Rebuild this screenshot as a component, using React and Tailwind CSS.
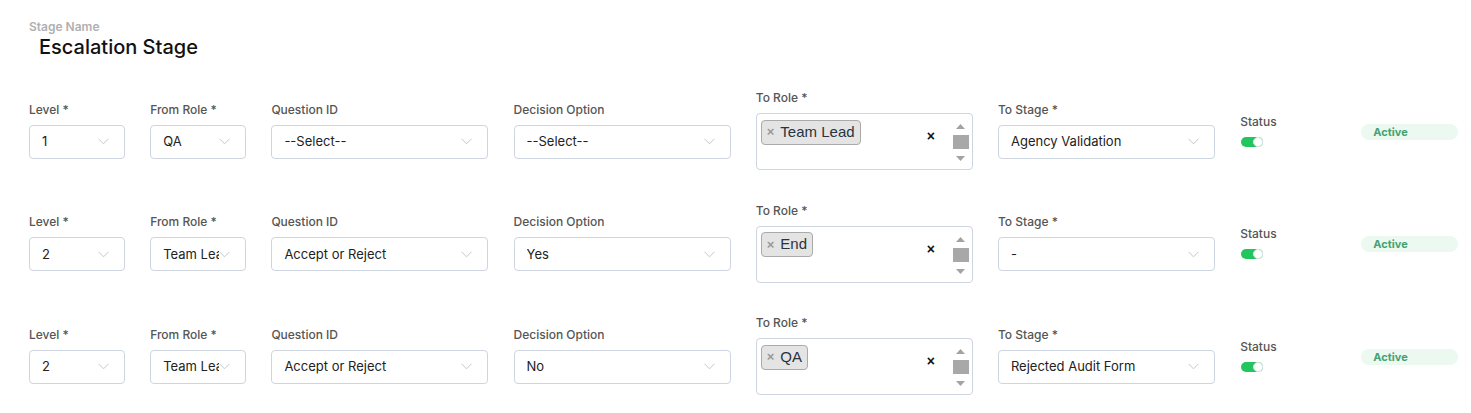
import React from 'react';

const rows = [
  { level: '1', fromRole: 'QA', question: '--Select--', decision: '--Select--', toRole: 'Team Lead', toStage: 'Agency Validation' },
  { level: '2', fromRole: 'Team Lead', question: 'Accept or Reject', decision: 'Yes', toRole: 'End', toStage: '-' },
  { level: '2', fromRole: 'Team Lead', question: 'Accept or Reject', decision: 'No', toRole: 'QA', toStage: 'Rejected Audit Form' },
];

function Chevron() {
  return (
    <svg width="11" height="7" viewBox="0 0 11 7" fill="none" className="shrink-0">
      <path d="M0.5 0.8 L5.5 5.8 L10.5 0.8" stroke="#c3c7cf" strokeWidth="1" />
    </svg>
  );
}

function Label({ children }) {
  return <div className="text-[12px] leading-[16px] font-medium text-[#555] mb-[7px]">{children}</div>;
}

function Select({ value, width }) {
  return (
    <div className={`${width} h-[34px] border border-[#cdd5e0] rounded-[4px] bg-white flex items-center pl-[12px] pr-[15px]`}>
      <span className="flex-1 overflow-hidden whitespace-nowrap text-[13px] text-[#222]">{value}</span>
      <Chevron />
    </div>
  );
}

function Field({ label, value, width }) {
  return (
    <div className={`${width} shrink-0`}>
      <Label>{label}</Label>
      <Select value={value} width={width} />
    </div>
  );
}

function MultiRole({ tag }) {
  return (
    <div className="w-[217px] shrink-0">
      <Label>To Role *</Label>
      <div className="w-[217px] h-[57px] border border-[#cdd5e0] rounded-[4px] bg-white flex pl-[4px] pt-[4px] pr-[3px]">
        <div className="flex-1">
          <span className="inline-flex items-center h-[25px] px-[5px] bg-[#e4e4e4] border border-[#aaa] rounded-[4px] font-['Liberation_Sans',Arial,sans-serif] text-[15px] text-[#2a3340]">
            <span className="text-[#999] font-bold text-[13px] mr-[6px]">×</span>
            {tag}
          </span>
        </div>
        <div className="w-[20px] flex items-start justify-center pt-[11px] font-['Liberation_Sans',Arial,sans-serif] font-bold text-[14px] leading-none text-[#111] mr-[12px]">×</div>
        <div className="w-[16px] flex flex-col items-center pt-[6px]">
          <svg width="9" height="5" viewBox="0 0 9 5"><path d="M0 5 L4.5 0 L9 5 Z" fill="#a3a3a3" /></svg>
          <div className="w-[16px] h-[14px] bg-[#a8a8a8] mt-[6px]" />
          <svg width="9" height="5" viewBox="0 0 9 5" className="mt-[7px]"><path d="M0 0 L4.5 5 L9 0 Z" fill="#a3a3a3" /></svg>
        </div>
      </div>
    </div>
  );
}

export default function App() {
  return (
    <div className="w-[1471px] h-[413px] bg-white font-['Inter','Noto_Sans',sans-serif] pl-[29px] overflow-hidden">
      {/* Header */}
      <div className="h-[74px] pt-[19px]">
        <div className="text-[12px] leading-[16px] font-semibold text-[#b0b0b0]">Stage Name</div>
        <div className="pl-[10px] text-[20px] leading-[24px] font-medium text-[#111]">Escalation Stage</div>
      </div>

      {rows.map((r, i) => (
        <div key={i} className="h-[112.5px] flex items-center gap-[25.2px]">
          <Field label="Level *" value={r.level} width="w-[96px]" />
          <Field label="From Role *" value={r.fromRole} width="w-[96px]" />
          <Field label="Question ID" value={r.question} width="w-[217px]" />
          <Field label="Decision Option" value={r.decision} width="w-[217px]" />
          <MultiRole tag={r.toRole} />
          <Field label="To Stage *" value={r.toStage} width="w-[217px]" />
          <div className="w-[96px] shrink-0">
            <div className="text-[12px] leading-[16px] font-medium text-[#555] mb-[7px]">Status</div>
            <div className="w-[22px] h-[10px] rounded-full bg-[#22c55e] relative ml-[1px]">
              <div className="absolute right-0 top-0 w-[10px] h-[10px] rounded-full bg-white border border-[#e5e7eb]" />
            </div>
          </div>
          <div className="w-[97px] h-[16px] rounded-full bg-[#ebf9f1] flex items-center pl-[12px] mt-[3px]">
            <span className="text-[11px] font-bold text-[#45a173]">Active</span>
          </div>
        </div>
      ))}
    </div>
  );
}
